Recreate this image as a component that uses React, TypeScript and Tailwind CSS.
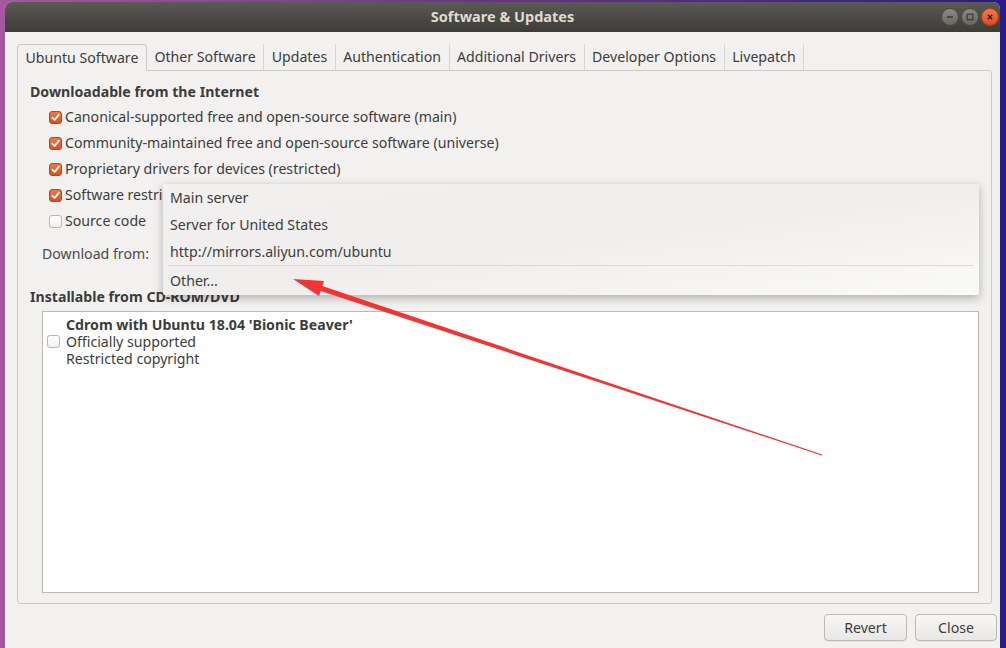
import React from 'react';

const font = { fontFamily: '"Noto Sans", "Open Sans", sans-serif' };

function Check({ on }: { on?: boolean }) {
  if (on) {
    return (
      <span className="flex h-[13px] w-[13px] shrink-0 items-center justify-center rounded-[3px] border border-[#b8461b] bg-gradient-to-b from-[#f07746] to-[#d9521f]">
        <svg width="9" height="9" viewBox="0 0 9 9">
          <path d="M1.2 4.6 L3.6 7 L7.9 1.6" fill="none" stroke="#fff" strokeWidth="1.7" strokeLinecap="round" strokeLinejoin="round" />
        </svg>
      </span>
    );
  }
  return <span className="h-[13px] w-[13px] shrink-0 rounded-[3px] border border-[#bab7b2] bg-gradient-to-b from-white to-[#f1efed]" />;
}

function Row({ on, label }: { on?: boolean; label: string }) {
  return (
    <div className="flex h-[26px] items-center gap-[3px] pl-[19px]">
      <Check on={on} />
      <span>{label}</span>
    </div>
  );
}

const tabs = ['Ubuntu Software', 'Other Software', 'Updates', 'Authentication', 'Additional Drivers', 'Developer Options', 'Livepatch'];

function WinButton({ kind }: { kind: 'min' | 'max' | 'close' }) {
  const close = kind === 'close';
  return (
    <span
      className={
        close
          ? 'flex h-[18px] w-[18px] items-center justify-center rounded-full border border-[#a8401a] bg-gradient-to-b from-[#f4774a] to-[#e0491b]'
          : 'flex h-[18px] w-[18px] items-center justify-center rounded-full border border-[#4a4944] bg-gradient-to-b from-[#8a8982] to-[#67665f]'
      }
    >
      <svg width="10" height="10" viewBox="0 0 10 10">
        {kind === 'min' && <path d="M2 5 H8" stroke="#3a3935" strokeWidth="1.4" />}
        {kind === 'max' && <rect x="2.2" y="2.2" width="5.6" height="5.6" fill="none" stroke="#3a3935" strokeWidth="1.2" />}
        {close && <path d="M2.8 2.8 L7.2 7.2 M7.2 2.8 L2.8 7.2" stroke="#3a1a0e" strokeWidth="1.3" />}
      </svg>
    </span>
  );
}

export default function App() {
  return (
    <div
      className="relative flex h-[648px] w-[1006px] overflow-hidden bg-gradient-to-r from-[#a5589d] via-[#6b2e8f] to-[#2a1a8a] pl-[5px] pr-[6px] pt-[2px] text-[14.15px] text-[#3c3c3c]"
      style={font}
    >
      <div className="flex flex-1 flex-col overflow-hidden rounded-t-[7px] bg-[#f2f1f0]">
        {/* title bar */}
        <div className="relative flex h-[30px] shrink-0 items-center justify-center bg-gradient-to-b from-[#5b5a54] to-[#3d3c38]">
          <span className="text-[14.5px] font-bold text-[#dfdbd2]">Software &amp; Updates</span>
          <div className="absolute right-[0px] top-[6px] flex gap-[2px] pr-[1px]">
            <WinButton kind="min" />
            <WinButton kind="max" />
            <WinButton kind="close" />
          </div>
        </div>

        {/* tabs */}
        <div className="ml-[12px] mr-[8px] mt-[12px] flex flex-1 flex-col">
          <div className="flex h-[26px] items-stretch">
            {tabs.map((t, i) =>
              i === 0 ? (
                <div key={t} className="relative z-10 -mb-px flex items-center rounded-t-[4px] border border-b-0 border-[#cdc9c4] bg-[#f2f1f0] px-[7.5px]">
                  {t}
                </div>
              ) : (
                <div key={t} className="flex items-center border-r border-[#d9d6d2] px-[7.5px]">
                  {t}
                </div>
              )
            )}
          </div>
          <div className="flex h-[534px] flex-col rounded-b-[3px] rounded-tr-[3px] border border-[#cdc9c4] px-[12px] pt-[11px]">
            <div className="flex h-[20px] items-center font-bold">Downloadable from the Internet</div>
            <div className="mt-[2px]">
              <Row on label="Canonical-supported free and open-source software (main)" />
              <Row on label="Community-maintained free and open-source software (universe)" />
              <Row on label="Proprietary drivers for devices (restricted)" />
              <Row on label="Software restricted by copyright or legal issues (multiverse)" />
              <Row label="Source code" />
            </div>
            <div className="mt-[7px] flex h-[26px] items-center pl-[12px] text-[#4a4a4a]">Download from:</div>
            <div className="mt-[20px] flex h-[20px] items-center font-bold">Installable from CD-ROM/DVD</div>
            <div className="ml-[12px] mt-[4px] h-[282px] border border-[#bdbab5] bg-white pl-[4px] pt-[4px]">
              <div className="flex items-center gap-[6px]">
                <Check />
                <div className="leading-[17px]">
                  <div className="font-bold">Cdrom with Ubuntu 18.04 'Bionic Beaver'</div>
                  <div>Officially supported</div>
                  <div>Restricted copyright</div>
                </div>
              </div>
            </div>
          </div>
          <div className="mt-[10px] flex justify-end gap-[8px]">
            <button className="h-[27px] w-[83px] rounded-[4px] border border-[#bcb8b3] bg-gradient-to-b from-[#f8f7f6] to-[#e9e7e4] text-[#3c3c3c] shadow-[0_1px_0_rgba(0,0,0,0.05)]">
              Revert
            </button>
            <button className="-mr-[5px] h-[27px] w-[82px] rounded-[4px] border border-[#bcb8b3] bg-gradient-to-b from-[#f8f7f6] to-[#e9e7e4] text-[#3c3c3c] shadow-[0_1px_0_rgba(0,0,0,0.05)]">
              Close
            </button>
          </div>
        </div>
      </div>

      {/* dropdown popup */}
      <div className="absolute left-[163px] top-[184px] w-[816px] rounded-[2px] bg-gradient-to-br from-[#f1f0ef] via-[#efeeed] to-[#fafaf9] shadow-[0_3px_10px_rgba(0,0,0,0.28)]">
        <div className="flex h-[27px] items-center px-[7px]">Main server</div>
        <div className="flex h-[27px] items-center px-[7px]">Server for United States</div>
        <div className="flex h-[27px] items-center px-[7px]">http://mirrors.aliyun.com/ubuntu</div>
        <div className="mx-[5px] h-[2px] border-t border-[#dcdad6] border-b-white" />
        <div className="flex h-[28px] items-center px-[7px]">Other...</div>
      </div>

      {/* red annotation arrow */}
      <svg className="pointer-events-none absolute left-0 top-0" width="1006" height="648">
        <polygon
          points="293,279 324,280.9 322.3,286.1 822.2,454.5 821.8,455.5 320.7,290.9 319,296.1"
          fill="#f03535"
        />
      </svg>
    </div>
  );
}
